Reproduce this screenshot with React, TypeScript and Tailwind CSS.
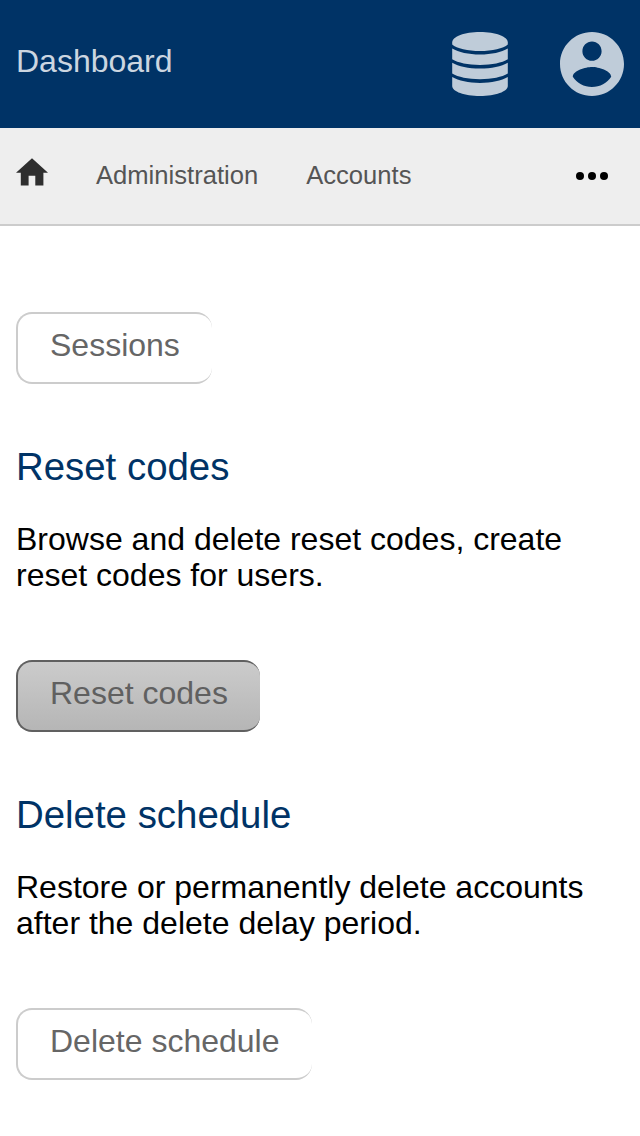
import React from 'react';

function DatabaseIcon() {
  return (
    <svg viewBox="0 0 56 64" className="h-16 w-14" fill="currentColor">
      <path d="M.2 10.500C.2 4.500 12.500 0 28 0s27.800 4.500 27.800 10.500v1.900C51.500 16.300 40 18.900 28 18.900S4.500 16.300 .2 12.400z" />
      <path d="M.2 16.400C6.500 20.200 16.500 22.400 28 22.400s21.500-2.200 27.800-6v10.900C50 30.900 40 32.900 28 32.900S6 30.900 .2 27.300z" />
      <path d="M.2 30.700C6.500 34.500 16.500 36.600 28 36.600s21.500-2.100 27.800-5.900v10.900C50 45.200 40 47.200 28 47.200S6 45.200 .2 41.600z" />
      <path d="M.2 45C6.500 48.800 16.500 50.900 28 50.900s21.500-2.100 27.800-5.900v9C55.800 59.600 43.500 64 28 64S.2 59.600 .2 54z" />
    </svg>
  );
}

function AccountIcon() {
  return (
    <svg viewBox="2 2 20 20" className="h-16 w-16" fill="currentColor">
      <path d="M12 2C6.480 2 2 6.480 2 12s4.480 10 10 10 10-4.480 10-10S17.520 2 12 2zm0 3c1.660 0 3 1.340 3 3s-1.340 3-3 3-3-1.340-3-3 1.340-3 3-3zm0 14.200c-2.500 0-4.710-1.280-6-3.220.03-1.990 4-3.080 6-3.080 1.990 0 5.970 1.090 6 3.080-1.290 1.940-3.500 3.220-6 3.220z" />
    </svg>
  );
}

function HomeIcon() {
  return (
    <svg viewBox="0 0 32 28" className="mt-[30px] h-7 w-8" fill="#2e2e2e">
      <path d="M16 .3 32 14.700h-4.600v12.900h-8.100V17.700h-6.700v9.900H4.800V14.700H0z" />
    </svg>
  );
}

function Button({ label, active = false }: { label: string; active?: boolean }) {
  return (
    <button
      className={
        'block h-[72px] rounded-2xl border-2 border-r-0 pr-[32.500px] pb-1.5 pl-8 text-[32px] leading-9 text-[#666] ' +
        (active ? 'border-[#606060] bg-linear-to-b from-[#ccc] to-[#b5b5b5] bg-origin-border text-[#606060]' : 'border-[#ccc] bg-white')
      }
    >
      {label}
    </button>
  );
}

function Section({ title, text }: { title: string; text: string }) {
  return (
    <section className="pt-[61px]">
      <h2 className="text-[38.400px] leading-[44px] text-[#003366]">{title}</h2>
      <p className="mt-8 mb-[67px] text-[32px] leading-9 text-black">{text}</p>
      <Button label={title} active={title === 'Reset codes'} />
    </section>
  );
}

export default function App() {
  return (
    <div className="h-[1136px] overflow-hidden bg-white font-['Liberation_Sans',Arial,sans-serif]">
      <header className="flex h-32 items-center justify-between bg-[#003366] px-4 text-[#bfccd9]">
        <h1 className="pb-1.5 text-[32px] leading-9 text-[#ccd6e0]">Dashboard</h1>
        <div className="flex items-center gap-[52px]">
          <DatabaseIcon />
          <AccountIcon />
        </div>
      </header>
      <nav className="flex h-[98px] border-b-2 border-[#ccc] bg-[#eee] pr-8 pl-4 text-[25.600px] leading-[30px] text-[#555]">
        <HomeIcon />
        <a className="mt-8 ml-12">Administration</a>
        <a className="mt-8 ml-12">Accounts</a>
        <svg viewBox="0 0 32 8" className="mt-11 ml-auto h-2 w-8" fill="#000">
          <circle cx="4" cy="4" r="4" />
          <circle cx="16" cy="4" r="4" />
          <circle cx="28" cy="4" r="4" />
        </svg>
      </nav>
      <main className="px-4 pt-[86px]">
        <Button label="Sessions" />
        <Section title="Reset codes" text="Browse and delete reset codes, create reset codes for users." />
        <Section title="Delete schedule" text="Restore or permanently delete accounts after the delete delay period." />
      </main>
    </div>
  );
}
